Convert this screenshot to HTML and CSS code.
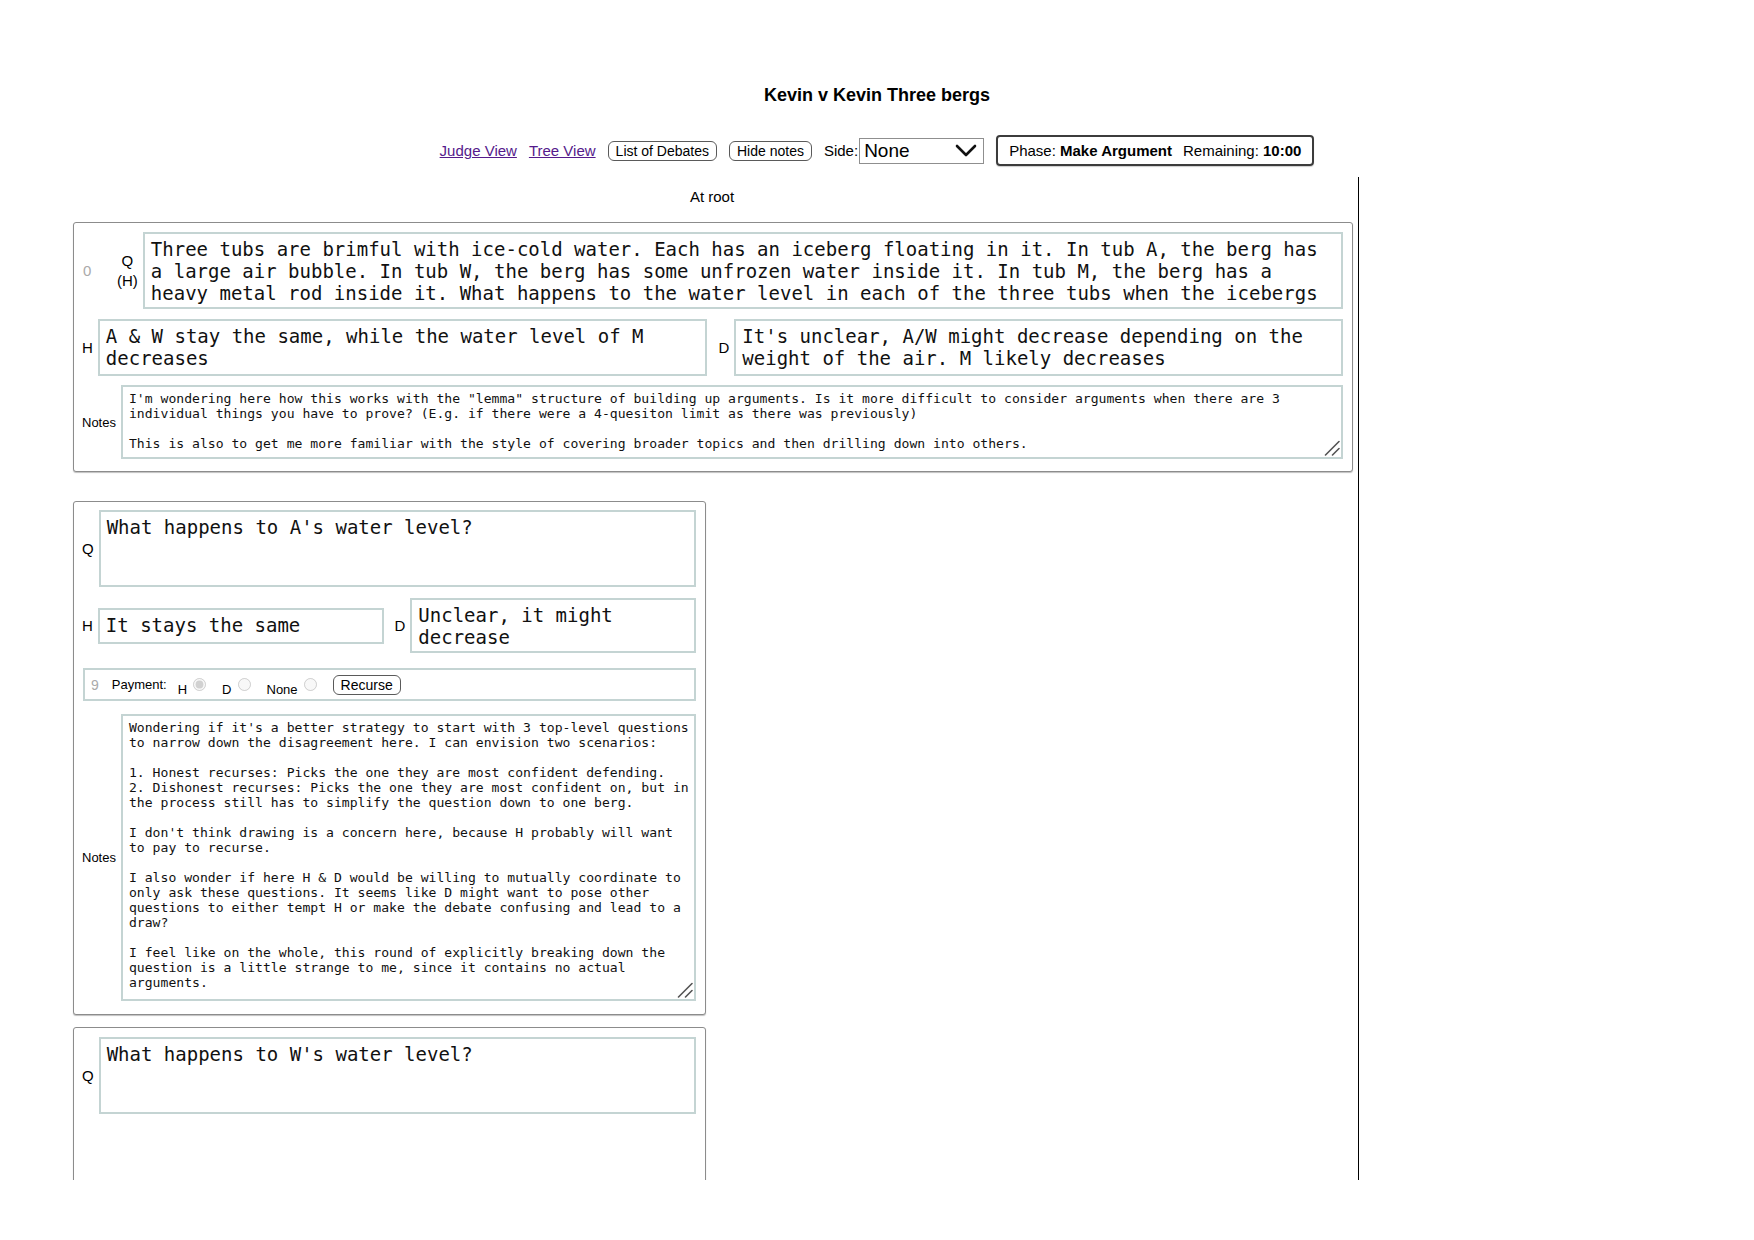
FILE: index.html
```html
<!DOCTYPE html>
<html>
<head>
<meta charset="utf-8">
<title>Kevin v Kevin Three bergs</title>
<link rel="stylesheet" href="styles.css">
</head>
<body>
<div class="header">
  <div class="title">Kevin v Kevin Three bergs</div>
  <div class="toolbar">
    <a class="link" href="#">Judge View</a>
    <a class="link" href="#">Tree View</a>
    <button class="btn">List of Debates</button>
    <button class="btn">Hide notes</button>
    <span class="side">Side:<span class="select"><span>None</span><svg width="22" height="13" viewBox="0 0 22 13"><path d="M2 2 L11 11 L20 2" fill="none" stroke="#111" stroke-width="2.6" stroke-linecap="round" stroke-linejoin="round"/></svg></span></span>
    <div class="phase">Phase: <b>Make Argument</b><span class="remain">Remaining: <b>10:00</b></span></div>
  </div>
</div>
<div class="main">
  <div class="col">
    <div class="where">At root</div>

    <div class="node root">
      <div class="row">
        <span class="num">0</span>
        <span class="lbl qh">Q<br>(H)</span>
        <textarea class="ta q" readonly>Three tubs are brimful with ice-cold water. Each has an iceberg floating in it. In tub A, the berg has a large air bubble. In tub W, the berg has some unfrozen water inside it. In tub M, the berg has a heavy metal rod inside it. What happens to the water level in each of the three tubs when the icebergs melt?</textarea>
      </div>
      <div class="pair root-pair">
        <div class="cell"><span class="lbl">H</span><textarea class="ta two" readonly>A &amp; W stay the same, while the water level of M decreases</textarea></div>
        <div class="cell"><span class="lbl">D</span><textarea class="ta two" readonly>It's unclear, A/W might decrease depending on the weight of the air. M likely decreases</textarea></div>
      </div>
      <div class="row notes-row root-notes-row">
        <span class="nlbl">Notes</span>
        <div class="notes-wrap">
          <textarea class="ta notes root-notes" readonly>I'm wondering here how this works with the "lemma" structure of building up arguments. Is it more difficult to consider arguments when there are 3 individual things you have to prove? (E.g. if there were a 4-quesiton limit as there was previously)

This is also to get me more familiar with the style of covering broader topics and then drilling down into others.</textarea>
          <svg class="grip" width="16" height="16" viewBox="0 0 16 16"><path d="M1.5 15 L15 1.5 M8.5 15 L15 8.5" fill="none" stroke="#555" stroke-width="1.6" stroke-linecap="round"/></svg>
        </div>
      </div>
    </div>

    <div class="node half">
      <div class="row">
        <span class="lbl">Q</span>
        <textarea class="ta q" readonly>What happens to A's water level?</textarea>
      </div>
      <div class="pair half-pair">
        <div class="cell"><span class="lbl">H</span><textarea class="ta one" readonly>It stays the same</textarea></div>
        <div class="cell"><span class="lbl">D</span><textarea class="ta two-b" readonly>Unclear, it might decrease</textarea></div>
      </div>
      <div class="payment">
        <span class="pnum">9</span>
        <span class="ptxt">Payment:</span>
        <span class="opt">H</span><input class="radio" type="radio" name="pay" disabled checked>
        <span class="opt">D</span><input class="radio" type="radio" name="pay" disabled>
        <span class="opt">None</span><input class="radio" type="radio" name="pay" disabled>
        <button class="btn recurse">Recurse</button>
      </div>
      <div class="row notes-row half-notes-row">
        <span class="nlbl">Notes</span>
        <div class="notes-wrap">
          <textarea class="ta notes half-notes" readonly>Wondering if it's a better strategy to start with 3 top-level questions to narrow down the disagreement here. I can envision two scenarios:

1. Honest recurses: Picks the one they are most confident defending.
2. Dishonest recurses: Picks the one they are most confident on, but in the process still has to simplify the question down to one berg.

I don't think drawing is a concern here, because H probably will want to pay to recurse.

I also wonder if here H &amp; D would be willing to mutually coordinate to only ask these questions. It seems like D might want to pose other questions to either tempt H or make the debate confusing and lead to a draw?

I feel like on the whole, this round of explicitly breaking down the question is a little strange to me, since it contains no actual arguments.</textarea>
          <svg class="grip" width="16" height="16" viewBox="0 0 16 16"><path d="M1.5 15 L15 1.5 M8.5 15 L15 8.5" fill="none" stroke="#555" stroke-width="1.6" stroke-linecap="round"/></svg>
        </div>
      </div>
    </div>

    <div class="node half last">
      <div class="row">
        <span class="lbl">Q</span>
        <textarea class="ta q" readonly>What happens to W's water level?</textarea>
      </div>
    </div>
  </div>
</div>
</body>
</html>
```
FILE: styles.css
```css
html, body {
  margin: 0;
  padding: 0;
  background: #fff;
}
body {
  font-family: "Liberation Sans", Arial, Helvetica, sans-serif;
  font-size: 15px;
  color: #000;
}
.header {
  padding-top: 84px;
}
.title {
  text-align: center;
  font-weight: bold;
  font-size: 18px;
  line-height: 22px;
}
.toolbar {
  margin-top: 29px;
  height: 31px;
  display: flex;
  justify-content: center;
  align-items: center;
  gap: 12px;
}
.link {
  color: #551a8b;
  text-decoration: underline;
  font-size: 15px;
}
.btn {
  font-family: "Liberation Sans", Arial, sans-serif;
  font-size: 14px;
  height: 20px;
  padding: 0 7px;
  margin: 0;
  background: #fff;
  color: #000;
  border: 1px solid #5a5a5a;
  border-radius: 6px;
  box-sizing: border-box;
  line-height: 16px;
}
.side {
  display: flex;
  align-items: center;
  font-size: 15px;
}
.select {
  display: inline-flex;
  align-items: center;
  justify-content: space-between;
  width: 125px;
  height: 26px;
  margin-left: 1px;
  padding: 0 6px 0 4px;
  box-sizing: border-box;
  border: 1px solid #8f8f8f;
  font-size: 19px;
  background: #fff;
}
.phase {
  height: 31px;
  box-sizing: border-box;
  border: 2px solid #3c3c3c;
  border-radius: 4px;
  padding: 0 11px;
  display: flex;
  align-items: center;
  font-size: 15px;
  white-space: pre;
  box-shadow: 0 1px 1px rgba(0,0,0,0.2);
}
.remain {
  margin-left: 11px;
}
.main {
  margin-top: 11px;
  height: 1003px;
  overflow: hidden;
  padding-left: 66px;
}
.col {
  width: 1293px;
  height: 100%;
  box-sizing: border-box;
  border-right: 1px solid #000;
  padding: 11px 7px 0 7px;
}
.where {
  text-align: center;
  line-height: 18px;
  font-size: 15px;
}
.node {
  box-sizing: border-box;
  border: 1px solid #8c8c8c;
  border-radius: 3px;
  box-shadow: 0 1px 1px rgba(0,0,0,0.25);
  background: #fff;
}
.root {
  width: 1280px;
  margin-top: 16px;
  padding: 9px 9px 12px 8px;
}
.half {
  width: 633px;
  margin-top: 29px;
  padding: 8px 9px 13px 8px;
}
.last {
  margin-top: 12px;
  padding-top: 9px;
  height: 400px;
}
.row {
  display: flex;
  align-items: center;
  gap: 5px;
}
.num {
  width: 30px;
  padding-left: 1px;
  box-sizing: border-box;
  color: #aaa;
  font-size: 15px;
  flex: none;
}
.lbl {
  flex: none;
  font-size: 15px;
}
.qh {
  text-align: center;
  line-height: 20px;
}
.ta {
  display: block;
  flex: 1;
  min-width: 0;
  margin: 0;
  font-family: "DejaVu Sans Mono", monospace;
  font-size: 19px;
  line-height: normal;
  color: #111;
  background: #fff;
  border: 2px solid #c4d4d3;
  border-radius: 0;
  padding: 4px 6px 5px 6px;
  box-sizing: border-box;
  resize: none;
  overflow: hidden;
  outline: none;
}
.q { height: 77px; }
.two { height: 57px; }
.two-b { height: 55px; }
.one { height: 36px; }
.pair {
  display: grid;
  grid-template-columns: 1fr 1fr;
  align-items: center;
}
.root-pair {
  margin-top: 10px;
  column-gap: 12px;
}
.half-pair {
  margin-top: 11px;
  column-gap: 11px;
}
.cell {
  display: flex;
  align-items: center;
  gap: 5px;
}
.root-notes-row { margin-top: 9px; }
.half-notes-row { margin-top: 13px; }
.nlbl {
  flex: none;
  font-size: 13px;
}
.notes-wrap {
  position: relative;
  flex: 1;
  min-width: 0;
}
.notes {
  width: 100%;
  font-size: 13.1px;
  padding: 4px 3px 4px 6px;
}
.grip {
  position: absolute;
  right: 3px;
  bottom: 3px;
}
.root-notes { height: 74px; }
.half-notes { height: 287px; }
.payment {
  margin-top: 15px;
  margin-left: 1px;
  height: 33px;
  box-sizing: border-box;
  border: 2px solid #c4d4d3;
  padding: 0 6px;
  display: flex;
  align-items: center;
  font-size: 13px;
}
.pnum {
  color: #aaa;
  font-size: 14px;
  margin-right: 13px;
}
.ptxt {
  margin-right: 11px;
}
.opt {
  padding-top: 9px;
  margin-right: 6px;
}
.radio {
  width: 13px;
  height: 13px;
  margin: 0 16px 0 0;
}
.recurse {
  margin-left: 0;
}
```
